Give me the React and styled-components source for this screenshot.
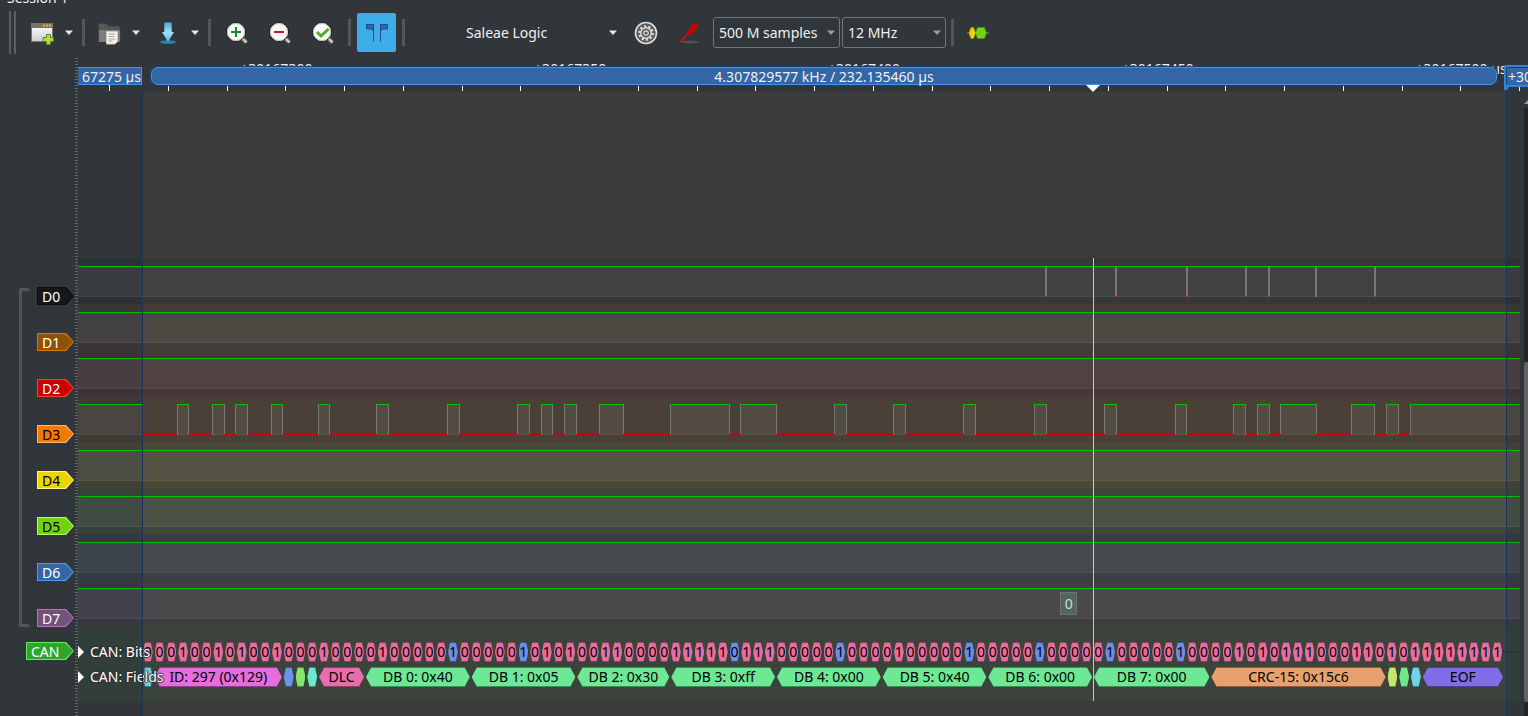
import React from "react";
import styled, { createGlobalStyle } from "styled-components";

const GlobalStyle = createGlobalStyle`
  * { box-sizing: border-box; }
  html, body { margin: 0; background: #31363b; }
  body, button, select { font-family: "Noto Sans", "Open Sans", sans-serif; font-size: 14px; color: #eff0f1; }
`;

/* ---------- data ---------- */

const BIT_COUNT = 116;
const HIGH_RUNS = [
  [3, 4], [6, 7], [8, 9], [11, 12], [15, 16], [20, 21], [26, 27], [32, 33], [34, 35], [36, 37],
  [39, 41], [45, 50], [51, 54], [59, 60], [64, 65], [70, 71], [76, 77], [82, 83], [88, 89],
  [93, 94], [95, 96], [97, 100], [103, 105], [106, 107], [108, 116],
];
const STUFF_BITS = new Set([26, 32, 50, 59, 70, 76, 82, 88]);
const BITS = Array.from({ length: BIT_COUNT }, (_, i) => ({
  value: HIGH_RUNS.some(([a, b]) => i >= a && i < b) ? 1 : 0,
  stuff: STUFF_BITS.has(i),
}));

const BUS_HIGH = [[-8, 0], ...HIGH_RUNS.slice(0, -1), [108, 122]];
const FLAT_HIGH = [[-8, 122]];
const ACK_PULSES = [76.95, 82.95, 88.95, 93.95, 95.95, 99.95, 104.95];
const ACK_HIGH = [-8, ...ACK_PULSES.map((p) => p + 0.08)].map((start, i) => [start, ACK_PULSES[i] ?? 122]);

const CHANNELS = [
  { name: "D0", fill: "#16191a", edge: "#0b0d0d", text: "#fff", tint: "0, 0, 0", high: ACK_HIGH },
  { name: "D1", fill: "#8f5202", edge: "#d67b03", text: "#fff", tint: "143, 82, 2", high: FLAT_HIGH },
  { name: "D2", fill: "#cc0000", edge: "#ff3b3b", text: "#fff", tint: "204, 0, 0", high: FLAT_HIGH },
  { name: "D3", fill: "#f57900", edge: "#ffb770", text: "#000", tint: "245, 121, 0", high: BUS_HIGH },
  { name: "D4", fill: "#edd400", edge: "#fff48a", text: "#000", tint: "237, 212, 0", high: FLAT_HIGH },
  { name: "D5", fill: "#73d216", edge: "#adff5a", text: "#000", tint: "115, 210, 22", high: FLAT_HIGH },
  { name: "D6", fill: "#3465a4", edge: "#4e97f5", text: "#fff", tint: "52, 101, 164", high: FLAT_HIGH },
  { name: "D7", fill: "#75507b", edge: "#af78b8", text: "#fff", tint: "117, 80, 123", high: FLAT_HIGH },
];

const FIELDS = [
  { bits: 1, color: "#6dcde8" },
  { bits: 11, color: "#e66de0", label: "ID: 297 (0x129)" },
  { bits: 1, color: "#6d93e8" },
  { bits: 1, color: "#82e86d" },
  { bits: 1, color: "#6de8d0" },
  { bits: 4, color: "#e86dab", label: "DLC" },
  { bits: 9, color: "#6de895", label: "DB 0: 0x40" },
  { bits: 9, color: "#6de895", label: "DB 1: 0x05" },
  { bits: 8, color: "#6de895", label: "DB 2: 0x30" },
  { bits: 9, color: "#6de895", label: "DB 3: 0xff" },
  { bits: 9, color: "#6de895", label: "DB 4: 0x00" },
  { bits: 9, color: "#6de895", label: "DB 5: 0x40" },
  { bits: 9, color: "#6de895", label: "DB 6: 0x00" },
  { bits: 10, color: "#6de895", label: "DB 7: 0x00" },
  { bits: 15, color: "#e8a06d", label: "CRC-15: 0x15c6" },
  { bits: 1, color: "#bfe86d" },
  { bits: 1, color: "#6de88a" },
  { bits: 1, color: "#6dd3e8" },
  { bits: 7, color: "#826de8", label: "EOF" },
];

/* ---------- frame ---------- */

const Page = styled.div`
  display: flex;
  flex-direction: column;
  height: 100vh;
  overflow: hidden;
  background: #31363b;
`;

const TabStrip = styled.div`
  display: flex;
  align-items: flex-end;
  height: 7px;
  padding-left: 7px;
  line-height: 18px;
  overflow: hidden;
`;

const Toolbar = styled.div`
  display: flex;
  align-items: center;
  height: 51px;
  padding-left: 9px;
  flex: none;
`;

const Grip = styled.span`
  width: 7px;
  height: 43px;
  margin-right: 6px;
  border: solid #5c5d5d;
  border-width: 0 2px;
`;

const Separator = styled.span`
  width: 3px;
  height: 27px;
  margin: 0 4px;
  background: #53575a;
`;

const ToolButton = styled.button`
  display: flex;
  align-items: center;
  justify-content: center;
  width: ${(p) => p.$width}px;
  height: 39px;
  margin: 0 ${(p) => (p.$active ? 2 : 0)}px;
  padding: 0;
  border: 0;
  border-radius: 2px;
  background: ${(p) => (p.$active ? "#3daee9" : "transparent")};
`;

const MenuButton = styled(ToolButton)`
  justify-content: flex-start;
  padding-left: 8px;
  gap: 11px;
`;

const DeviceButton = styled(ToolButton)`
  justify-content: space-between;
  padding: 0 7px 0 57px;
`;

const SelectBox = styled.span`
  display: flex;
  align-items: center;
  position: relative;
  width: ${(p) => p.$width}px;
  height: 31px;
  margin: 0 1px;
  border: 1px solid #71767a;
  border-radius: 3px;

  select {
    width: 100%;
    height: 100%;
    padding: 0 0 0 5px;
    border: 0;
    appearance: none;
    background: transparent;
  }

  svg {
    position: absolute;
    right: 4px;
    pointer-events: none;
  }
`;

const Workspace = styled.div`
  display: grid;
  grid-template-columns: 75px 3px minmax(0, 1fr);
  flex: 1;
  min-height: 0;
`;

const Splitter = styled.div`
  background: repeating-linear-gradient(#63676a 0 1px, transparent 1px 3px);
`;

/* ---------- channel labels ---------- */

const Header = styled.div`
  display: grid;
  grid-template-columns: 19px 10px minmax(0, 1fr);
  align-content: start;
  padding-top: 215px;
`;

const GroupBracket = styled.div`
  grid-column: 2;
  margin: 15px 0 14px;
  border: 3px solid #55564f;
  border-right: 0;
  border-radius: 2px 0 0 2px;
`;

const ChannelLabels = styled.div`
  grid-column: 3;
`;

const LabelRow = styled.div`
  display: flex;
  align-items: center;
  justify-content: flex-end;
  height: 46px;
  padding-right: 1px;
`;

const DecoderLabelRow = styled(LabelRow)`
  grid-column: 1 / -1;
  height: 20px;
`;

const Tag = styled.span`
  position: relative;
  z-index: 0;
  display: block;
  width: ${(p) => p.$width}px;
  height: 18px;
  padding-left: 5px;
  line-height: 20px;
  color: ${(p) => p.$text};

  &::before, &::after {
    content: "";
    position: absolute;
    z-index: -1;
    inset: 0;
    background: ${(p) => p.$edge};
    clip-path: polygon(0 0, calc(100% - 8px) 0, 100% 50%, calc(100% - 8px) 100%, 0 100%);
  }
  &::after {
    inset: 1px;
    background: ${(p) => p.$fill};
  }
`;

/* ---------- ruler ---------- */

const Main = styled.div`
  display: grid;
  grid-template-rows: 34px minmax(0, 1fr);
  grid-template-columns: minmax(0, 1fr) 8px;
  min-width: 0;
  overflow: hidden;
`;

const Ruler = styled.div`
  grid-column: 1 / -1;
  display: grid;
  grid-template-rows: 8px 19px 7px;
  position: relative;
  overflow: hidden;
`;

const TimeLabels = styled.div`
  display: grid;
  grid-template-columns: repeat(5, 1fr);
  margin: 0 -80px 0 61px;
  text-align: center;
  line-height: 22px;
`;

const SpanRow = styled.div`
  display: flex;
  position: relative;
  z-index: 1;
`;

const SpanBar = styled.div`
  flex: 1;
  height: 18px;
  margin: 1px 7px 0 9px;
  line-height: 17px;
  text-align: center;
  border: 1px solid #4a90e8;
  border-radius: 7px;
  box-shadow: 0 0 0 1px #1d3f70;
  background: #3465a4;
`;

const StartFlag = styled.div`
  display: flex;
  justify-content: flex-end;
  width: 64px;
  height: 18px;
  margin-top: 1px;
  line-height: 17px;
  white-space: nowrap;
  overflow: hidden;
  border: 1px solid #4a90e8;
  border-left: 0;
  background: #3465a4;
`;

const EndFlag = styled.div`
  position: relative;
  width: 24px;
  height: 22px;
  margin-top: -1px;
  padding: 1px 0 0 2px;
  line-height: 18px;
  white-space: nowrap;
  border: solid #2f82de;
  border-width: 2px 0 2px 2px;
  border-radius: 3px 0 0 3px;
  box-shadow: inset 1px 1px 0 #1d3f70;
  background: #3465a4;

  &::after {
    content: "";
    position: absolute;
    left: -2px;
    top: 18px;
    width: 6px;
    height: 5px;
    background: #2f82de;
    clip-path: polygon(0 0, 100% 0, 50% 100%, 0 100%);
  }
`;

const Ticks = styled.div`
  display: grid;
  grid-template-columns: repeat(25, 1fr);
  margin: 0 -50px 0 31px;

  span {
    height: 6px;
    border-left: 1px solid #fff;
  }
`;

const HoverMarker = styled.div`
  position: absolute;
  z-index: 2;
  left: 70%;
  bottom: 0;
  width: 14px;
  height: 7px;
  margin-left: -7px;
  background: #fff;
  clip-path: polygon(0 0, 100% 0, 50% 100%);
`;

/* ---------- trace view ---------- */

const View = styled.div`
  position: relative;
  z-index: 0;
  padding-top: 166px;
  overflow: hidden;
`;

const CursorRegion = styled.div`
  position: absolute;
  z-index: -1;
  inset: 0 14px 0 64px;
  background: #3c3c3c;
`;

const CursorLines = styled.div`
  position: absolute;
  inset: 0 13px 0 64px;
  border: solid #18345c;
  border-width: 0 1px;
  pointer-events: none;
`;

const TraceRow = styled.div`
  height: 46px;
  padding: 8px 16px 0 64px;
  overflow: hidden;
  background: rgba(${(p) => p.$tint}, 0.08);
`;

const WaveSvg = styled.svg`
  display: block;
  width: 100%;
  height: 31px;
  overflow: visible;
  shape-rendering: crispEdges;
`;

const DecoderRow = styled.div`
  display: grid;
  grid-template-rows: 20px 20px;
  row-gap: 5px;
  align-content: start;
  position: relative;
  height: 75px;
  padding: 16px 16px 0 64px;
  background: linear-gradient(#28332f, #28332f) 0 25px / 100% 1px no-repeat, rgba(51, 163, 47, 0.08);
`;

const AnnotationRow = styled.div`
  display: flex;
`;

const Annotation = styled.span`
  position: relative;
  z-index: 0;
  flex: ${(p) => p.$bits} 1 0;
  min-width: 0;
  line-height: 20px;
  text-align: center;
  white-space: nowrap;
  color: #000;

  &::before, &::after {
    content: "";
    position: absolute;
    z-index: -1;
    inset: 0 1px;
    background: color-mix(in srgb, ${(p) => p.$color} 60%, #000);
    clip-path: polygon(
      0 50%, ${(p) => p.$point}px 0, calc(100% - ${(p) => p.$point}px) 0,
      100% 50%, calc(100% - ${(p) => p.$point}px) 100%, ${(p) => p.$point}px 100%
    );
  }
  &::after {
    inset: 1px;
    background: ${(p) => p.$color};
  }
`;

const BitText = styled.span`
  display: flex;
  justify-content: center;
`;

const RowTitles = styled.div`
  position: absolute;
  top: 16px;
  left: 0;
  display: grid;
  row-gap: 5px;
  line-height: 20px;
  white-space: nowrap;
  color: #fff;
  text-shadow: 1px 0 1px #333, -1px 0 1px #333, 0 1px 1px #333, 0 -1px 1px #333;

  span {
    display: flex;
    align-items: center;
    gap: 6px;
  }
  span::before {
    content: "";
    width: 6px;
    height: 12px;
    background: #fff;
    clip-path: polygon(0 0, 100% 50%, 0 100%);
  }
`;

const HoverLine = styled.div`
  position: absolute;
  left: 70.4%;
  top: 166px;
  width: 1px;
  height: 443px;
  background: #c8c8c8;
`;

const HoverValue = styled.div`
  position: absolute;
  right: calc(29.6% + 16px);
  top: 500px;
  width: 17px;
  height: 23px;
  line-height: 22px;
  text-align: center;
  color: #d5dcd8;
  border: 1px solid #6f7472;
  background: #53665d;
`;

const ScrollArea = styled.div`
  display: grid;
  grid-template-rows: 6px 6px 258px 340px minmax(0, 1fr);
  margin-left: 4px;
  overflow: hidden;
`;

const ScrollArrow = styled.span`
  grid-row: 2;
  width: 12px;
  background: #9a9a9a;
  clip-path: polygon(0 100%, 50% 0, 100% 100%);
`;

const ScrollTrack = styled.span`
  grid-row: ${(p) => p.$row};
  margin-top: ${(p) => p.$top || 0}px;
  background: #232323;
`;

const ScrollThumb = styled.span`
  grid-row: 4;
  background: #636363;
  border-radius: 3px 0 0 3px;
`;

/* ---------- icons ---------- */

const Caret = ({ color = "#e6e6e6" }) => (
  <svg width="8" height="5" viewBox="0 0 8 5"><path d="M0 .5h8L4 5z" fill={color} /></svg>
);

const NewSessionIcon = () => (
  <svg width="24" height="24" viewBox="0 0 24 24">
    <defs>
      <linearGradient id="win" x2="0" y2="1"><stop stopColor="#fff" /><stop offset="1" stopColor="#cfcfcf" /></linearGradient>
    </defs>
    <rect x="1.5" y="2.500" width="21" height="18" fill="url(#win)" stroke="#777" />
    <path d="M1 2h22v5H1z" fill="#77736c" />
    <path d="M13 3.500h2v2h-2zM16 3.500h2v2h-2zM19 3.500h2v2h-2z" fill="#f0b13a" />
    <path d="M16.500 13.500h4v3h3v4h-3v3h-4v-3h-3.500v-4h3.500z" fill="#b5d64d" stroke="#5f8a12" />
  </svg>
);

const OpenIcon = () => (
  <svg width="24" height="24" viewBox="0 0 24 24">
    <path d="M1.500 20.500v-17q0-1 1-1h6.500l2 2.500h11q1 0 1 1v14.500z" fill="#575757" stroke="#434343" />
    <path d="M2 9h21v12H2z" fill="#7d7d7d" />
    <path d="M9.500 10.500h11v10l-2.500 2.500h-8.500z" fill="#f5f3ef" stroke="#cbc8c2" />
    <path d="M11.500 13h7M11.500 15.500h6M11.500 18h7M11.500 20h4" stroke="#aaa59b" />
  </svg>
);

const SaveIcon = () => (
  <svg width="24" height="24" viewBox="0 0 24 24">
    <defs>
      <linearGradient id="arrow" x2="0" y2="1"><stop stopColor="#4ea9dd" /><stop offset=".5" stopColor="#a5dff8" /><stop offset="1" stopColor="#52b3e4" /></linearGradient>
    </defs>
    <ellipse cx="12" cy="21" rx="8" ry="1.800" fill="#2583ae" />
    <path d="M8.500 1.500h7l.3 9.500H18l-6 10-6-10h2.200z" fill="url(#arrow)" />
  </svg>
);

const ZoomIcon = ({ children }) => (
  <svg width="24" height="24" viewBox="0 0 24 24">
    <path d="M17 17l4.500 4.500" stroke="#77746c" strokeWidth="4" />
    <path d="M17 17l4.500 4.500" stroke="#d6d2c4" strokeWidth="2" />
    <circle cx="11" cy="11" r="9.500" fill="#fbfbf8" stroke="#15181a" strokeWidth="1" />
    <circle cx="11" cy="11" r="8.500" fill="none" stroke="#c9c6bc" />
    {children}
  </svg>
);

const CursorsIcon = () => (
  <svg width="24" height="24" viewBox="0 0 24 24">
    <path d="M1.500 3.500h7v17M22.500 3.500h-7v17" fill="none" stroke="#1c4d93" />
    <path d="M1.500 3.500h7v6L6 8H1.500zM22.500 3.500h-7v6L18 8h4.500z" fill="#3465a4" stroke="#1c4d93" />
  </svg>
);

const GearIcon = () => (
  <svg width="24" height="24" viewBox="0 0 24 24">
    <circle cx="12" cy="12" r="10.500" fill="#5b5b5b" stroke="#dedede" strokeWidth="1.600" />
    <circle cx="12" cy="12" r="6.800" fill="none" stroke="#dedede" strokeWidth="2" strokeDasharray="2.200 2.070" />
    <circle cx="12" cy="12" r="5.300" fill="none" stroke="#dedede" strokeWidth="1.400" />
    <circle cx="12" cy="12" r="2.200" fill="none" stroke="#dedede" strokeWidth="1.200" />
  </svg>
);

const ProbeIcon = () => (
  <svg width="24" height="24" viewBox="0 0 24 24">
    <ellipse cx="12" cy="21" rx="9" ry="1.500" fill="#4b5053" />
    <path d="M1.500 21.500L12 10.500" stroke="#e01010" strokeWidth="1.500" />
    <path d="M10 10l5.500-7.500 2.500-1 2.500 2-1 3.500-6.500 6.500-1.500 1-3-2.500z" fill="#cc0000" />
  </svg>
);

const DecoderIcon = () => (
  <svg width="24" height="24" viewBox="0 0 24 24">
    <path d="M1 12h22" stroke="#8a8a8a" />
    <path d="M3 12l2-5.500h2.500L9.500 12l-2 5.500H5z" fill="#edd400" stroke="#b39f00" strokeWidth=".5" />
    <path d="M9.500 12l2-5.500h7l2 5.500-2 5.500h-7z" fill="#73d216" stroke="#4e9a06" strokeWidth=".5" />
  </svg>
);

/* ---------- parts ---------- */

function Wave({ high }) {
  return (
    <WaveSvg viewBox={`0 0 ${BIT_COUNT} 31`} preserveAspectRatio="none" aria-hidden="true">
      {high.map(([a, b]) => (
        <rect key={a} x={a} y="0" width={b - a} height="31" fill="#fff" fillOpacity=".06" />
      ))}
      <rect x="-8" y="30" width="130" height="1" fill="#fff" fillOpacity=".05" />
      {high.slice(1).map(([a], i) => (
        <g key={a}>
          <path d={`M${high[i][1]} 0V31M${a} 0V31`} stroke="#777" vectorEffect="non-scaling-stroke" />
          <rect x={high[i][1]} y="30" width={a - high[i][1]} height="1" fill="#c80000" />
        </g>
      ))}
      {high.map(([a, b]) => (
        <rect key={a} x={a} y="0" width={b - a} height="1" fill="#00c000" />
      ))}
    </WaveSvg>
  );
}

export default function App() {
  return (
    <Page>
      <GlobalStyle />
      <TabStrip>Session 1</TabStrip>
      <Toolbar role="toolbar">
        <Grip />
        <MenuButton $width={56} aria-label="New session"><NewSessionIcon /><Caret /></MenuButton>
        <Separator />
        <MenuButton $width={59} aria-label="Open"><OpenIcon /><Caret /></MenuButton>
        <MenuButton $width={56} aria-label="Save"><SaveIcon /><Caret /></MenuButton>
        <Separator />
        <ToolButton $width={43} aria-label="Zoom in">
          <ZoomIcon><path d="M11 6v10M6 11h10" stroke="#1a8a2a" strokeWidth="2" /></ZoomIcon>
        </ToolButton>
        <ToolButton $width={43} aria-label="Zoom out">
          <ZoomIcon><path d="M6 11h10" stroke="#c4122f" strokeWidth="2" /></ZoomIcon>
        </ToolButton>
        <ToolButton $width={43} aria-label="Zoom to fit">
          <ZoomIcon><path d="M6 11l4 4 7.500-7" fill="none" stroke="#4caf2a" strokeWidth="3" /></ZoomIcon>
        </ToolButton>
        <Separator />
        <ToolButton $width={39} $active aria-label="Show cursors" aria-pressed="true"><CursorsIcon /></ToolButton>
        <Separator />
        <DeviceButton $width={215}>Saleae Logic<Caret /></DeviceButton>
        <ToolButton $width={44} aria-label="Configure device"><GearIcon /></ToolButton>
        <ToolButton $width={44} aria-label="Configure channels"><ProbeIcon /></ToolButton>
        <SelectBox $width={127}>
          <select aria-label="Sample count" defaultValue="500 M samples"><option>500 M samples</option></select>
          <Caret color="#9a9c9e" />
        </SelectBox>
        <SelectBox $width={104}>
          <select aria-label="Sample rate" defaultValue="12 MHz"><option>12 MHz</option></select>
          <Caret color="#9a9c9e" />
        </SelectBox>
        <Separator />
        <ToolButton $width={40} aria-label="Add protocol decoder"><DecoderIcon /></ToolButton>
      </Toolbar>

      <Workspace>
        <Header>
          <GroupBracket />
          <ChannelLabels>
            {CHANNELS.map((c) => (
              <LabelRow key={c.name}>
                <Tag $width={37} $fill={c.fill} $edge={c.edge} $text={c.text}>{c.name}</Tag>
              </LabelRow>
            ))}
          </ChannelLabels>
          <DecoderLabelRow>
            <Tag $width={48} $fill="#33a32f" $edge="#5bf256" $text="#fff">CAN</Tag>
          </DecoderLabelRow>
        </Header>
        <Splitter />
        <Main>
          <Ruler>
            <TimeLabels>
              {[300, 350, 400, 450, 500].map((t) => <span key={t}>+30167{t} µs</span>)}
            </TimeLabels>
            <SpanRow>
              <StartFlag>67275 µs</StartFlag>
              <SpanBar>4.307829577 kHz / 232.135460 µs</SpanBar>
              <EndFlag>+30</EndFlag>
            </SpanRow>
            <Ticks>{Array.from({ length: 25 }, (_, i) => <span key={i} />)}</Ticks>
            <HoverMarker />
          </Ruler>
          <View>
            <CursorRegion />
            {CHANNELS.map((c) => (
              <TraceRow key={c.name} $tint={c.tint}><Wave high={c.high} /></TraceRow>
            ))}
            <DecoderRow>
              <AnnotationRow>
                {BITS.map((b, i) => (
                  <Annotation key={i} $bits={1} $point={2} $color={b.stuff ? "#6d8be8" : "#e86d9f"}>
                    <BitText>{b.value}</BitText>
                  </Annotation>
                ))}
              </AnnotationRow>
              <AnnotationRow>
                {FIELDS.map((f, i) => (
                  <Annotation key={i} $bits={f.bits} $point={f.bits > 1 ? 5 : 2} $color={f.color}>{f.label}</Annotation>
                ))}
              </AnnotationRow>
              <RowTitles><span>CAN: Bits</span><span>CAN: Fields</span></RowTitles>
            </DecoderRow>
            <CursorLines />
            <HoverLine />
            <HoverValue>0</HoverValue>
          </View>
          <ScrollArea>
            <ScrollArrow />
            <ScrollTrack $row={3} $top={4} />
            <ScrollThumb />
            <ScrollTrack $row={5} />
          </ScrollArea>
        </Main>
      </Workspace>
    </Page>
  );
}
